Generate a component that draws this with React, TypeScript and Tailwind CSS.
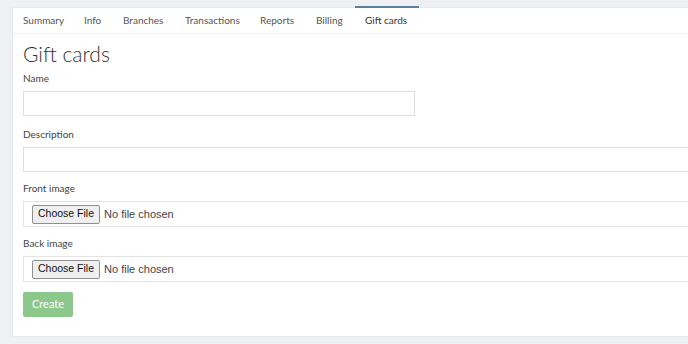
import React from 'react';

// tab label + width so the labels line up with the reference
const tabs: { label: string; w: string }[] = [
  { label: 'Summary', w: 'w-[61px]' },
  { label: 'Info', w: 'w-[39px]' },
  { label: 'Branches', w: 'w-[62px]' },
  { label: 'Transactions', w: 'w-[75px]' },
  { label: 'Reports', w: 'w-[56px]' },
  { label: 'Billing', w: 'w-[49px]' },
  { label: 'Gift cards', w: 'w-[64px]' },
];

const sysFont = { fontFamily: '"Liberation Sans", Arial, sans-serif' };

const FileField: React.FC = () => (
  <div className="flex items-center h-[26px] border border-[#e4e4e4] pl-[8px]">
    <span
      className="h-[19px] px-[5px] flex items-center bg-[#efefef] border border-[#8f8f8f] rounded-[2px] text-[10.5px] text-[#111]"
      style={sysFont}
    >
      Choose File
    </span>
    <span className="ml-[4px] text-[11px] text-[#444]" style={sysFont}>
      No file chosen
    </span>
  </div>
);

const Label: React.FC<{ text: string; mt: string }> = ({ text, mt }) => (
  <div className={`${mt} leading-[14px] text-[10px] text-[#444]`}>{text}</div>
);

const App: React.FC = () => {
  const active = 'Gift cards';

  return (
    <div className="w-[688px] h-[344px] overflow-hidden bg-[#eef0f4] pt-[7px] pl-[12px] font-['Lato',sans-serif]">
      <div className="w-[700px] h-[330px] bg-white border-l border-t border-b border-[#e6e8ec] rounded-[2px]">
        {/* Tabs */}
        <div className="flex h-[26px] border-b border-[#eef0f2]">
          {tabs.map(t => (
            <div
              key={t.label}
              className={
                t.label === active
                  ? `${t.w} pl-[10px] flex items-center text-[10px] text-[#333] border-t-2 border-[#5d7f9e] -mt-[2px]`
                  : `${t.w} pl-[10px] flex items-center text-[10px] text-[#555]`
              }
            >
              {t.label}
            </div>
          ))}
        </div>

        <div className="pl-[10px] pt-[6px]">
          <h1 className="text-[21px] leading-[28px] font-light text-[#333]">Gift cards</h1>

          <Label text="Name" mt="mt-[3px]" />
          <div className="mt-[6px] w-[392px] h-[25px] border border-[#dedede]" />

          <Label text="Description" mt="mt-[11px]" />
          <div className="mt-[6px] h-[25px] border border-[#dedede]" />

          <Label text="Front image" mt="mt-[9px]" />
          <div className="mt-[6px]">
            <FileField />
          </div>

          <Label text="Back image" mt="mt-[9px]" />
          <div className="mt-[6px]">
            <FileField />
          </div>

          <button className="mt-[10px] w-[50px] h-[25px] bg-[#8cc78c] rounded-[2px] text-[11px] text-white">
            Create
          </button>
        </div>
      </div>
    </div>
  );
};

export default App;
